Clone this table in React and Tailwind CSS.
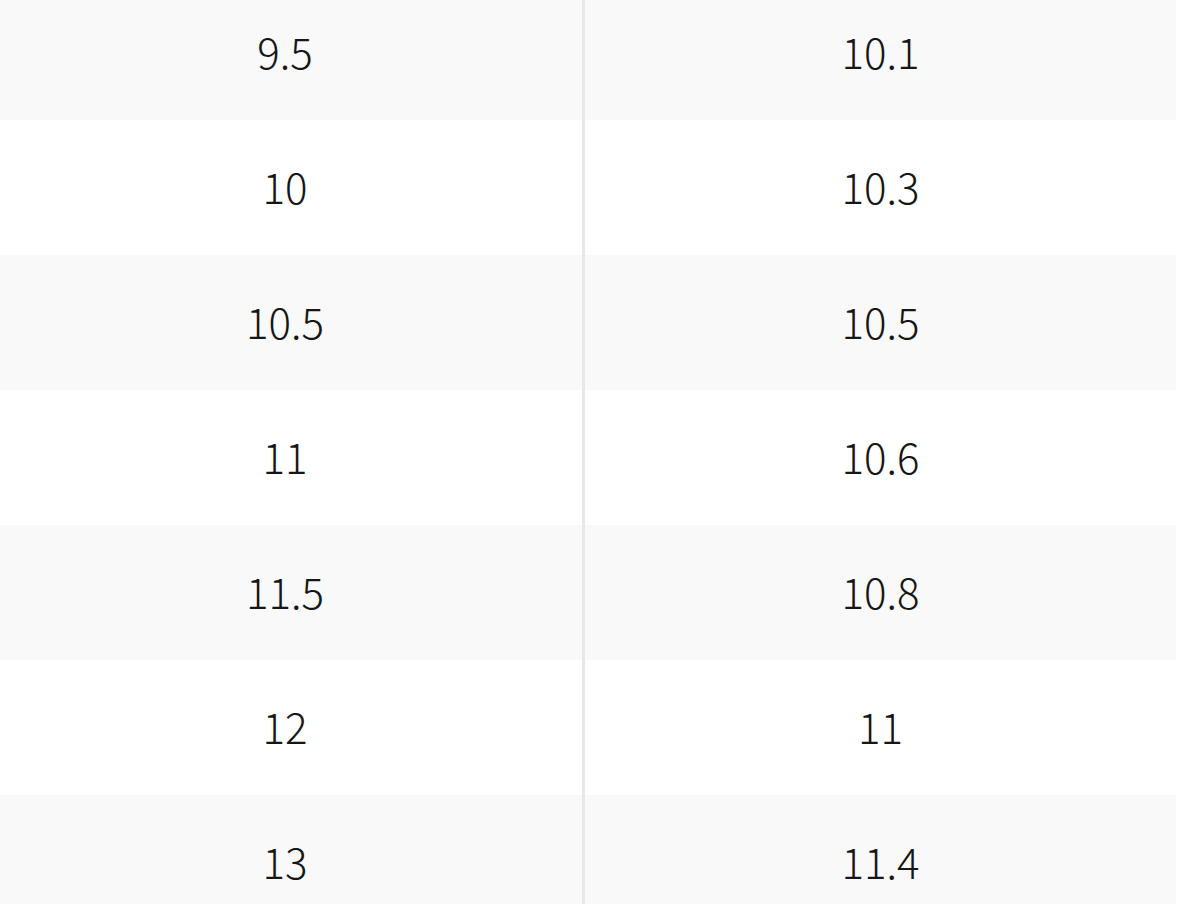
import React from "react";

const rows = [
  ["9.5", "10.1"],
  ["10", "10.3"],
  ["10.5", "10.5"],
  ["11", "10.6"],
  ["11.5", "10.8"],
  ["12", "11"],
  ["13", "11.4"],
];

export default function App() {
  return (
    <div className="w-[1186px] h-[904px] overflow-hidden bg-white">
      <div
        className="-ml-[12px] -mt-[15px] w-[1188px] flex flex-col text-[42px] font-light text-[#161616]"
        style={{ fontFamily: '"Noto Sans CJK SC", "Noto Sans", sans-serif' }}
      >
        {rows.map(([a, b], i) => (
          <div
            key={i}
            className={`flex h-[135px] ${i % 2 === 0 ? "bg-[#f9f9f9]" : "bg-white"}`}
          >
            <div className="w-[597px] shrink-0 flex items-center justify-center pb-[4px] border-r-[3px] border-[#e8e8e8]">
              {a}
            </div>
            <div className="flex-1 flex items-center justify-center pb-[4px]">{b}</div>
          </div>
        ))}
      </div>
    </div>
  );
}
